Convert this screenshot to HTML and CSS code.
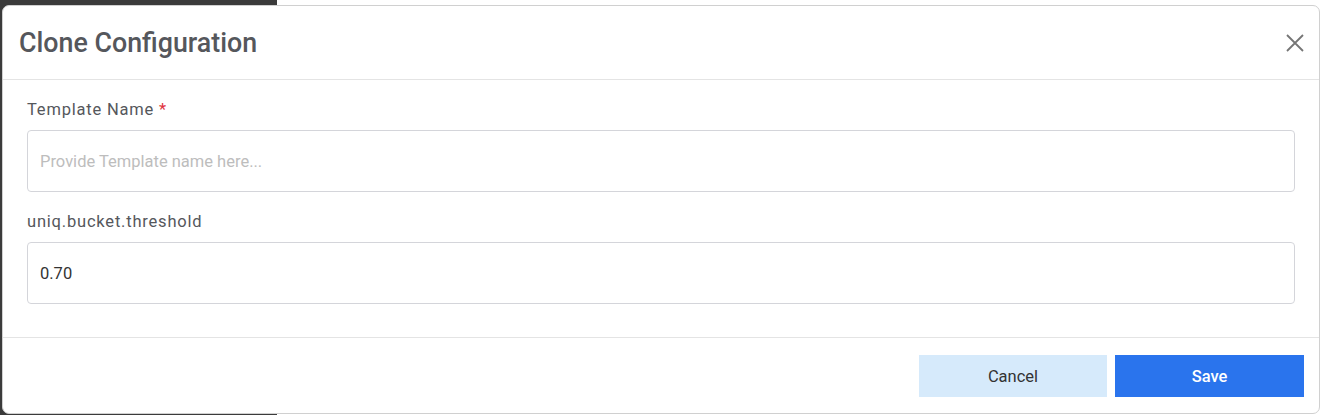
FILE: index.html
```html
<!DOCTYPE html>
<html lang="en">
<head>
<meta charset="utf-8">
<title>Clone Configuration</title>
<link rel="stylesheet" href="styles.css">
</head>
<body>
<div class="page">
  <div class="sidebar"></div>
  <div class="content"></div>
</div>
<div class="modal" role="dialog" aria-labelledby="modal-title">
  <div class="modal-header">
    <h2 class="modal-title" id="modal-title">Clone Configuration</h2>
    <button class="close-btn" aria-label="Close">
      <svg width="18" height="18" viewBox="0 0 18 18"><path d="M1 1L17 17M17 1L1 17" stroke="#757575" stroke-width="1.8" fill="none"/></svg>
    </button>
  </div>
  <div class="modal-body">
    <div class="field">
      <label class="field-label">Template Name <span class="req">*</span></label>
      <input class="field-input" type="text" placeholder="Provide Template name here...">
    </div>
    <div class="field">
      <label class="field-label">uniq.bucket.threshold</label>
      <input class="field-input" type="text" value="0.70">
    </div>
  </div>
  <div class="modal-footer">
    <button class="btn btn-cancel">Cancel</button>
    <button class="btn btn-save">Save</button>
  </div>
</div>
</body>
</html>
```
FILE: styles.css
```css
html, body {
  margin: 0;
  padding: 0;
  width: 1323px;
  height: 415px;
  overflow: hidden;
  font-family: Roboto, "Liberation Sans", Arial, sans-serif;
}
.page {
  display: flex;
  height: 415px;
}
.sidebar {
  width: 277px;
  background: #3b3b3b;
}
.content {
  flex: 1;
  background: #ffffff;
}
.modal {
  position: absolute;
  left: 2px;
  top: 5px;
  width: 1316px;
  height: 407px;
  background: #fff;
  border: 1px solid #d0d0d0;
  border-radius: 7px;
  display: flex;
  flex-direction: column;
  overflow: hidden;
}
.modal-header {
  height: 74px;
  border-bottom: 1px solid #e4e4e4;
  display: flex;
  align-items: center;
  justify-content: space-between;
  padding: 0 15px 0 16px;
  box-sizing: border-box;
  flex: none;
}
.modal-title {
  margin: 0;
  font-size: 26.8px;
  font-weight: 500;
  color: #55575c;
  line-height: 32px;
}
.close-btn {
  background: none;
  border: 0;
  padding: 0;
  width: 18px;
  height: 18px;
  display: flex;
  cursor: pointer;
}
.modal-body {
  flex: none;
  height: 257px;
  box-sizing: border-box;
  padding: 18px 24px 0 24px;
  display: flex;
  flex-direction: column;
  gap: 18px;
}
.field {
  display: flex;
  flex-direction: column;
  gap: 9px;
}
.field-label {
  font-size: 16.5px;
  line-height: 23px;
  color: #55575c;
  letter-spacing: 0.8px;
}
.req {
  color: #e0333c;
}
.field-input {
  height: 62px;
  box-sizing: border-box;
  border: 1px solid #d4d5da;
  border-radius: 4px;
  padding: 0 12px;
  font-family: Roboto, "Liberation Sans", Arial, sans-serif;
  font-size: 16.5px;
  color: #333;
  outline: none;
}
.field-input::placeholder {
  color: #bdbdbd;
}
.modal-footer {
  flex: 1;
  border-top: 1px solid #e4e4e4;
  display: flex;
  justify-content: flex-end;
  align-items: flex-start;
  gap: 8px;
  padding: 17px 15px 0 0;
}
.btn {
  height: 42px;
  border: 0;
  border-radius: 0;
  font-family: Roboto, "Liberation Sans", Arial, sans-serif;
  font-size: 16.5px;
  cursor: pointer;
}
.btn-cancel {
  width: 188px;
  background: #d6eafb;
  color: #333;
}
.btn-save {
  width: 189px;
  background: #2a74ed;
  color: #fff;
  font-weight: 500;
}
```
